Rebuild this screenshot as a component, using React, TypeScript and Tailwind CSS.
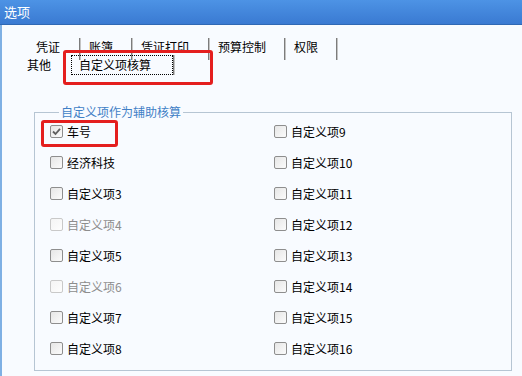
import React from 'react'

type Item = { label: string; checked?: boolean; disabled?: boolean }

const leftItems: Item[] = [
  { label: '车号', checked: true },
  { label: '经济科技' },
  { label: '自定义项3' },
  { label: '自定义项4', disabled: true },
  { label: '自定义项5' },
  { label: '自定义项6', disabled: true },
  { label: '自定义项7' },
  { label: '自定义项8' }
]

const rightItems: Item[] = Array.from({ length: 8 }).map((_, i) => ({
  label: `自定义项${i + 9}`
}))

const topTabs = [
  { label: '凭证', w: 'w-[51px]' },
  { label: '账簿', w: 'w-[50px]' },
  { label: '凭证打印', w: 'w-[75px]' },
  { label: '预算控制', w: 'w-[74px]' },
  { label: '权限', w: 'w-[50px]' }
]

const Separator = ({ h }: { h: string }) => (
  <div className={`${h} w-[2px] border-l border-r border-l-[#7c7c7c] border-r-[#c4c4c4]`} />
)

const CheckBox = ({ item }: { item: Item }) => (
  <div className="flex h-[31px] items-center">
    <div
      className={`relative h-[13px] w-[13px] rounded-[2px] border bg-gradient-to-br ${
        item.disabled
          ? 'border-[#c9c9c9] from-[#f4f4f4] to-[#fdfdfd]'
          : 'border-[#8e8e8e] from-[#e6e6e6] to-[#fbfbfb]'
      }`}
    >
      {item.checked && (
        <svg viewBox="0 0 11 11" className="absolute left-0 top-0 h-[11px] w-[11px]">
          <path d="M2 5.5 L4.5 8 L9 2.8" fill="none" stroke="#5f5f5f" strokeWidth="1.8" />
        </svg>
      )}
    </div>
    <span
      className={`ml-[4px] text-[12px] leading-4 ${
        item.disabled ? 'text-[#8d8d8d]' : 'text-black'
      }`}
    >
      {item.label}
    </span>
  </div>
)

export default function App() {
  return (
    <div
      className="relative flex h-[376px] w-[522px] flex-col overflow-hidden bg-[#f8fbff]"
      style={{ fontFamily: '"Noto Sans CJK SC", "Noto Sans", sans-serif' }}
    >
      <div className="flex h-[25px] items-center border-b border-[#2f68b4] bg-gradient-to-b from-[#4d93e5] to-[#3a7ad2] pl-[4px] text-[13px] text-white">
        选项
      </div>

      <div className="flex flex-1 flex-col border-l-2 border-[#7fb0e4] pt-[13px]">
        {/* tab strip, row 1 */}
        <div className="ml-[26px] flex h-[22px] items-start">
          {topTabs.map((t) => (
            <React.Fragment key={t.label}>
              <div className={`${t.w} pl-[8px] pt-[1px] text-[12px] leading-4 text-black`}>
                {t.label}
              </div>
              <Separator h="h-[22px]" />
            </React.Fragment>
          ))}
        </div>

        {/* tab strip, row 2 */}
        <div className="-mt-[5px] ml-[25px] flex h-[20px] items-center">
          <div className="w-[44px] text-[12px] leading-4 text-black">其他</div>
          <div className="flex h-[20px] w-[102px] items-center border border-dotted border-black pl-[7px] text-[12px] leading-4 text-black">
            自定义项核算
          </div>
          <Separator h="h-[20px]" />
        </div>

        <fieldset className="ml-[32px] mt-[29px] w-[478px] border border-[#b6c5d3] px-[15px] pb-[6px] pt-0">
          <legend className="ml-[9px] px-[2px] text-[12px] leading-4 text-[#3f7fc6]">
            自定义项作为辅助核算
          </legend>
          <div className="-mt-[4px] grid grid-cols-[224px_1fr]">
            <div className="flex flex-col">
              {leftItems.map((it) => (
                <CheckBox key={it.label} item={it} />
              ))}
            </div>
            <div className="flex flex-col">
              {rightItems.map((it) => (
                <CheckBox key={it.label} item={it} />
              ))}
            </div>
          </div>
        </fieldset>
      </div>

      {/* red annotation frames */}
      <div className="absolute left-[63px] top-[50px] h-[35px] w-[150px] rounded-[3px] border-[3px] border-[#e41e1e]" />
      <div className="absolute left-[41px] top-[120px] h-[27px] w-[77px] rounded-[3px] border-[3px] border-[#e41e1e]" />
    </div>
  )
}
